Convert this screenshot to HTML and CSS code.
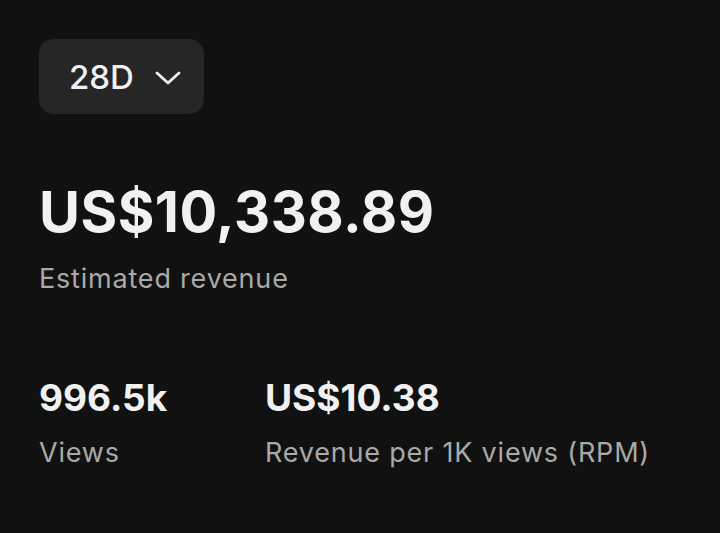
FILE: index.html
```html
<!DOCTYPE html>
<html lang="en">
<head>
    <meta charset="UTF-8">
    <meta name="viewport" content="width=device-width, initial-scale=1.0">
    <title>Revenue</title>
    <link rel="stylesheet" href="styles.css">
</head>
<body>

    <div class="page">
        <button class="period">
            <span>28D</span>
            <svg class="chevron" width="28" height="16" viewBox="0 0 28 16">
                <path d="M3 3 L14 13 L25 3" fill="none" stroke="#f1f1f1" stroke-width="2.8" stroke-linecap="round" stroke-linejoin="round"/>
            </svg>
        </button>

        <div class="total">
            <div class="total-value">US$10,338.89</div>
            <div class="total-label">Estimated revenue</div>
        </div>

        <div class="stats">
            <div class="stat">
                <div class="stat-value">996.5k</div>
                <div class="stat-label">Views</div>
            </div>
            <div class="stat">
                <div class="stat-value">US$10.38</div>
                <div class="stat-label">Revenue per 1K views (RPM)</div>
            </div>
        </div>
    </div>

</body>
</html>
```

FILE: styles.css
```css
body {
    margin: 0;
    padding: 0;
    background-color: #111111;
    color: #f1f1f1;
    font-family: Inter, "Noto Sans", sans-serif;
    min-height: 100vh;
}
.page {
    padding: 39px 0 0 39px;
}
.period {
    display: flex;
    align-items: center;
    gap: 20px;
    width: 165px;
    height: 75px;
    padding: 0 0 0 30px;
    border: none;
    border-radius: 15px;
    background-color: #262626;
    color: #f1f1f1;
    font-family: inherit;
    font-size: 33px;
    font-weight: 500;
    cursor: pointer;
}
.chevron {
    margin-top: 2px;
}
.total {
    margin-top: 64px;
}
.total-value {
    font-size: 56px;
    font-weight: 700;
    line-height: 68px;
    letter-spacing: 0.5px;
}
.total-label {
    margin-top: 17px;
    font-size: 27px;
    line-height: 32px;
    letter-spacing: 0.8px;
    color: #a9a9a9;
}
.stats {
    display: grid;
    grid-template-columns: 226px auto;
    margin-top: 81px;
}
.stat-value {
    font-size: 37px;
    font-weight: 700;
    line-height: 44px;
}
.stat-label {
    margin-top: 17px;
    font-size: 27px;
    line-height: 32px;
    letter-spacing: 0.8px;
    color: #a9a9a9;
}
```
